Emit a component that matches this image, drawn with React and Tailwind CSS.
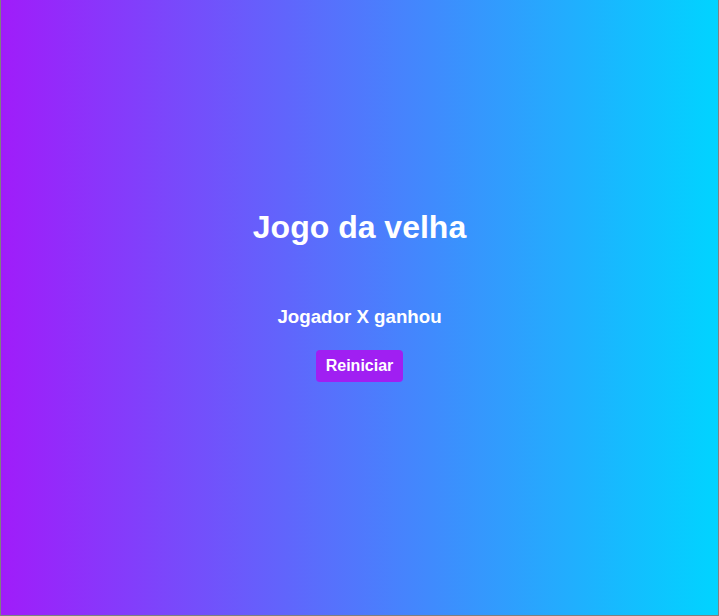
export default function App() {
  return (
    <div
      className="h-screen flex flex-col items-center justify-center border-x border-b border-[#7f7f7f] bg-[linear-gradient(to_right,#a01cfa,#00d4ff)] text-white"
      style={{ fontFamily: '"Liberation Sans", Arial, sans-serif' }}
    >
      <h1 className="text-[32px] font-bold leading-[37px]">Jogo da velha</h1>
      <p className="mt-[60px] text-[18.72px] font-bold leading-[21px]">Jogador X ganhou</p>
      <button className="mt-[23px] mb-[25px] h-8 px-2.5 rounded bg-[#a01ff2] text-base font-bold text-white">
        Reiniciar
      </button>
    </div>
  );
}
